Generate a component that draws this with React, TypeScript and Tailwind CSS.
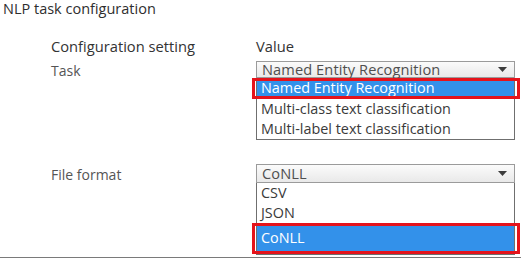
const fontCls = "font-['Open_Sans','Noto_Sans',sans-serif]";

type Opt = { label: string; picked?: boolean; h: string };

function Arrow() {
  return (
    <svg width="9" height="5" viewBox="0 0 9 5" className="block">
      <path d="M0 0 H9 L4.5 5 Z" fill="#3c3c3c" />
    </svg>
  );
}

function OpenSelect({ value, options, boxH }: { value: string; options: Opt[]; boxH: string }) {
  return (
    <div className="flex flex-col w-[259px]">
      <div
        className={`flex items-center justify-between border border-[#9b9b9b] bg-gradient-to-b from-[#fbfbfb] to-[#e9e9e9] pl-[5px] pr-[7px] ${boxH}`}
      >
        <span className="text-[14.6px] leading-none text-[#4f4f4f] tracking-[0.1px]">{value}</span>
        <Arrow />
      </div>
      <div className="flex flex-col border-x border-b border-[#6f6f6f] bg-white">
        {options.map((o) => (
          <div
            key={o.label}
            className={`relative flex items-center pl-[4px] text-[14.4px] leading-none ${o.h} ${
              o.picked ? "bg-[#3391ea] text-white" : "text-[#3a3a3a]"
            }`}
          >
            {o.label}
            {o.picked && (
              <div className="absolute -left-[5px] -right-[6px] top-0 bottom-0 border-[3px] border-[#e5131b]" />
            )}
          </div>
        ))}
      </div>
    </div>
  );
}

export default function App() {
  return (
    <div className={`w-[521px] h-[258px] overflow-hidden bg-white border-b border-[#7a7a7a] ${fontCls}`}>
      <div className="h-[36px] pl-[3px] pt-[0px] text-[14.5px] leading-[18px] text-[#2e2e2e]">
        NLP task configuration
      </div>
      <div className="ml-[51px] grid grid-cols-[205px_259px]">
        <div className="h-[25px] text-[14.7px] leading-[20px] text-[#333]">Configuration setting</div>
        <div className="h-[25px] text-[14.7px] leading-[20px] text-[#333]">Value</div>

        <div className="pt-[1px] text-[14px] leading-[18px] text-[#555]">Task</div>
        <OpenSelect
          value="Named Entity Recognition"
          boxH="h-[17px]"
          options={[
            { label: "Named Entity Recognition", picked: true, h: "h-[21px]" },
            { label: "Multi-class text classification", h: "h-[20px]" },
            { label: "Multi-label text classification", h: "h-[20px]" },
          ]}
        />

        <div className="mt-[24px] pt-[2px] text-[14px] leading-[18px] text-[#555]">File format</div>
        <div className="mt-[24px]">
          <OpenSelect
            value="CoNLL"
            boxH="h-[19px]"
            options={[
              { label: "CSV", h: "h-[20px]" },
              { label: "JSON", h: "h-[20px]" },
              { label: "CoNLL", picked: true, h: "h-[31px]" },
            ]}
          />
        </div>
      </div>
    </div>
  );
}
